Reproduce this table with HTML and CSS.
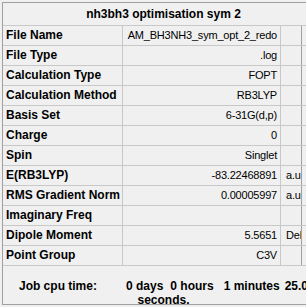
FILE: index.html
```html
<!DOCTYPE html>
<html>
<head>
<meta charset="utf-8">
<link rel="stylesheet" href="styles.css">
</head>
<body>
<div class="panel">
  <div class="title">nh3bh3 optimisation sym 2</div>
  <div class="grid">
    <div class="row"><div class="lab">File Name</div><div class="val">AM_BH3NH3_sym_opt_2_redo</div><div class="unit"></div></div>
    <div class="row"><div class="lab">File Type</div><div class="val">.log</div><div class="unit"></div></div>
    <div class="row"><div class="lab">Calculation Type</div><div class="val">FOPT</div><div class="unit"></div></div>
    <div class="row"><div class="lab">Calculation Method</div><div class="val">RB3LYP</div><div class="unit"></div></div>
    <div class="row"><div class="lab">Basis Set</div><div class="val">6-31G(d,p)</div><div class="unit"></div></div>
    <div class="row"><div class="lab">Charge</div><div class="val">0</div><div class="unit"></div></div>
    <div class="row"><div class="lab">Spin</div><div class="val">Singlet</div><div class="unit"></div></div>
    <div class="row"><div class="lab">E(RB3LYP)</div><div class="val">-83.22468891</div><div class="unit">a.u.</div></div>
    <div class="row"><div class="lab">RMS Gradient Norm</div><div class="val">0.00005997</div><div class="unit">a.u.</div></div>
    <div class="row"><div class="lab">Imaginary Freq</div><div class="val"></div><div class="unit"></div></div>
    <div class="row"><div class="lab">Dipole Moment</div><div class="val">5.5651</div><div class="unit">Debye</div></div>
    <div class="row"><div class="lab">Point Group</div><div class="val">C3V</div><div class="unit"></div></div>
  </div>
  <div class="cpu">
    <div class="cpu-line"><span>Job cpu time:</span><span class="g1">0 days</span><span class="g2">0 hours</span><span class="g3">1 minutes</span><span class="g4">25.0</span></div>
    <div class="cpu-line">seconds.</div>
  </div>
</div>
</body>
</html>
```
FILE: styles.css
```css
html, body {
  margin: 0;
  padding: 0;
}
body {
  width: 306px;
  height: 307px;
  overflow: hidden;
  background: #f0f0f0;
  font-family: "Liberation Sans", Arial, sans-serif;
  color: #000;
}
.panel {
  box-sizing: border-box;
  margin: 2px 0 0 2px;
  width: 322px;
  height: 303px;
  border: 1px solid #a0a0a0;
  border-right: none;
  display: flex;
  flex-direction: column;
  overflow: hidden;
}
.title {
  height: 22px;
  line-height: 22px;
  border-bottom: 1px solid #c8c8c8;
  text-align: center;
  font-weight: bold;
  font-size: 12px;
  white-space: nowrap;
}
.grid {
  display: flex;
  flex-direction: column;
}
.row {
  display: grid;
  grid-template-columns: 120px 158px 21px;
  height: 19px;
  border-bottom: 1px solid #c8c8c8;
}
.lab, .val, .unit {
  line-height: 19px;
  white-space: nowrap;
  overflow: hidden;
}
.lab {
  border-right: 1px solid #c8c8c8;
  padding-left: 3px;
  font-weight: bold;
  font-size: 12px;
}
.val {
  border-right: 1px solid #c8c8c8;
  padding-right: 3px;
  text-align: right;
  font-size: 11px;
  letter-spacing: -0.2px;
}
.unit {
  border-right: 1px solid #a0a0a0;
  padding-left: 5px;
  font-size: 11px;
  letter-spacing: -0.2px;
}
.cpu {
  flex: 1;
  overflow: hidden;
  padding-top: 13px;
  font-weight: bold;
  font-size: 12px;
  text-align: center;
}
.cpu-line {
  line-height: 14px;
  white-space: nowrap;
}
.g1 { margin-left: 29px; }
.g2 { margin-left: 7px; }
.g3 { margin-left: 10px; }
.g4 { margin-left: 5px; }
```
